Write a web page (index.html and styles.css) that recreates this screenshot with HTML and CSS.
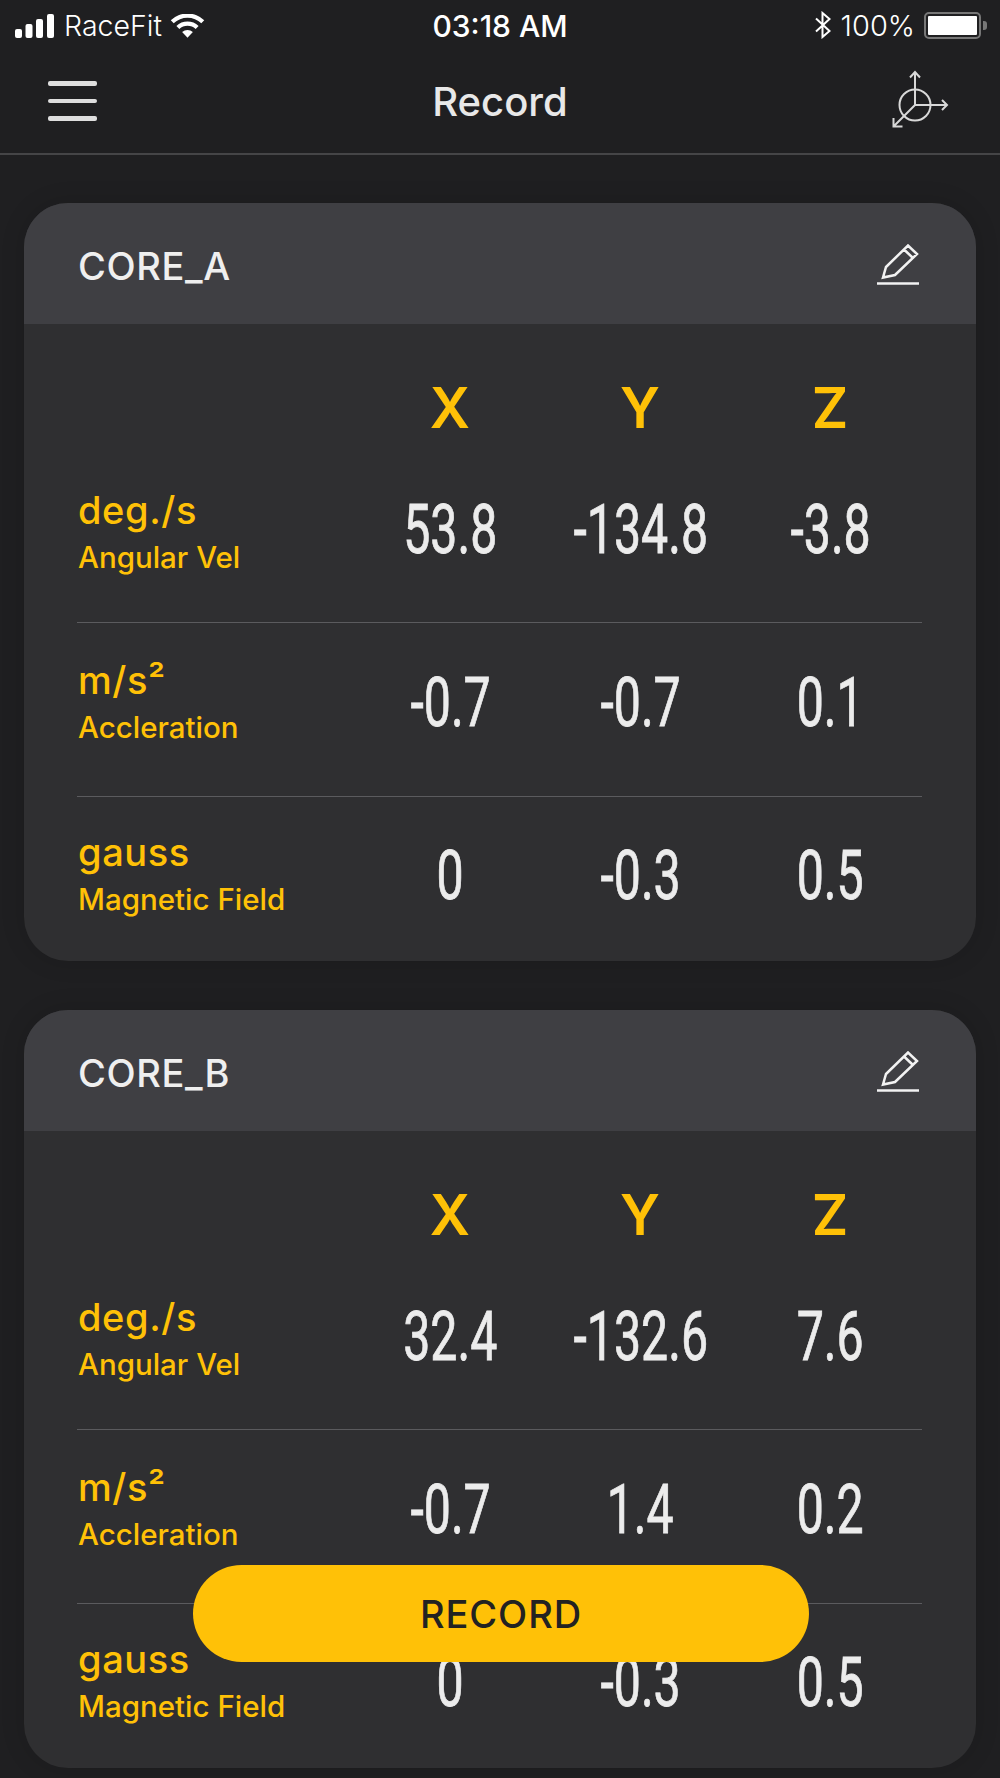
FILE: index.html
```html
<!DOCTYPE html>
<html lang="en">
<head>
<meta charset="utf-8">
<title>Record</title>
<link rel="stylesheet" href="styles.css">
</head>
<body>
<div class="phone">
  <div class="status">
    <div class="status-left">
      <svg class="signal" viewBox="0 0 40 24"><rect x="0" y="15" width="7" height="9" rx="2"/><rect x="10.5" y="10" width="7" height="14" rx="2"/><rect x="21" y="5" width="7" height="19" rx="2"/><rect x="32" y="0" width="7" height="24" rx="2"/></svg>
      <span class="carrier">RaceFit</span>
      <svg class="wifi" viewBox="0 0 36 24"><path d="M18 24 L12.5 18.2 A8 8 0 0 1 23.5 18.2 Z"/><path d="M9.6 15.2 L6.6 12 A16.5 16.5 0 0 1 29.4 12 L26.4 15.2 A12.2 12.2 0 0 0 9.6 15.2 Z"/><path d="M3.8 9.2 L0.8 6 A25 25 0 0 1 35.2 6 L32.2 9.2 A20.5 20.5 0 0 0 3.8 9.2 Z"/></svg>
    </div>
    <div class="clock">03:18 AM</div>
    <div class="status-right">
      <svg class="bt" viewBox="0 0 18 28"><path d="M2 7.5 L15.5 20 L8.5 26 L8.5 2 L15.5 8 L2 20.5"/></svg>
      <span class="pct">100%</span>
      <div class="battery"><div class="battery-fill"></div></div>
      <div class="battery-nub"></div>
    </div>
  </div>
  <header class="nav">
    <div class="burger"><span></span><span></span><span></span></div>
    <h1 class="title">Record</h1>
    <svg class="axes" viewBox="0 0 60 60"><circle cx="25" cy="36" r="15.5"/><path d="M25 36 V3 M20 8.5 L25 3 L30 8.5 M25 36 H57 M52 31 L57 36 L52 41 M25 36 L3.500 57.500 M3.500 49 V57.500 H12.500"/></svg>
  </header>

  <section class="card">
    <div class="card-head">
      <span class="card-name">CORE_A</span>
      <svg class="pencil" viewBox="0 0 42 42"><path d="M6 33.500 L9 23 L31 1.500 L40 10 L18 31 Z M27 5.500 L36 14"/><path d="M0 39.500 H42"/></svg>
    </div>
    <div class="axis-row"><span class="axis">X</span><span class="axis">Y</span><span class="axis">Z</span></div>
    <div class="row first">
      <div class="label"><div class="unit">deg./s</div><div class="quantity">Angular Vel</div></div>
      <div class="value"><span>53.8</span></div><div class="value"><span>-134.8</span></div><div class="value"><span>-3.8</span></div>
    </div>
    <div class="row ruled">
      <div class="label"><div class="unit">m/s²</div><div class="quantity">Accleration</div></div>
      <div class="value"><span>-0.7</span></div><div class="value"><span>-0.7</span></div><div class="value"><span>0.1</span></div>
    </div>
    <div class="row ruled last">
      <div class="label"><div class="unit">gauss</div><div class="quantity">Magnetic Field</div></div>
      <div class="value"><span>0</span></div><div class="value"><span>-0.3</span></div><div class="value"><span>0.5</span></div>
    </div>
  </section>

  <section class="card">
    <div class="card-head">
      <span class="card-name">CORE_B</span>
      <svg class="pencil" viewBox="0 0 42 42"><path d="M6 33.500 L9 23 L31 1.500 L40 10 L18 31 Z M27 5.500 L36 14"/><path d="M0 39.500 H42"/></svg>
    </div>
    <div class="axis-row"><span class="axis">X</span><span class="axis">Y</span><span class="axis">Z</span></div>
    <div class="row first">
      <div class="label"><div class="unit">deg./s</div><div class="quantity">Angular Vel</div></div>
      <div class="value"><span>32.4</span></div><div class="value"><span>-132.6</span></div><div class="value"><span>7.6</span></div>
    </div>
    <div class="row ruled">
      <div class="label"><div class="unit">m/s²</div><div class="quantity">Accleration</div></div>
      <div class="value"><span>-0.7</span></div><div class="value"><span>1.4</span></div><div class="value"><span>0.2</span></div>
    </div>
    <div class="row ruled last">
      <div class="label"><div class="unit">gauss</div><div class="quantity">Magnetic Field</div></div>
      <div class="value"><span>0</span></div><div class="value"><span>-0.3</span></div><div class="value"><span>0.5</span></div>
    </div>
  </section>

  <button class="record">RECORD</button>
</div>
</body>
</html>
```
FILE: styles.css
```css
* { box-sizing: border-box; }
html, body { margin: 0; padding: 0; background: #1f1f21; }
.phone {
  position: relative;
  width: 1000px;
  height: 1778px;
  overflow: hidden;
  background: #1f1f21;
  font-family: Inter, "Liberation Sans", sans-serif;
  color: #ececec;
}
.status {
  position: relative;
  height: 52px;
  display: flex;
  align-items: center;
  justify-content: space-between;
  padding: 0 13px 2px 15px;
  color: #fff;
}
.status-left, .status-right { display: flex; align-items: center; }
.signal { width: 40px; height: 24px; fill: #fff; margin-top: 1px; }
.carrier { font-size: 28.500px; font-weight: 300; margin-left: 9px; }
.wifi { width: 35px; height: 24px; fill: #fff; margin-left: 8px; margin-top: 1px; }
.clock {
  position: absolute;
  left: 0;
  right: 0;
  top: 11px;
  text-align: center;
  font-size: 30px;
  font-weight: 500;
  line-height: 30px;
}
.bt { width: 18px; height: 28px; fill: none; stroke: #fff; stroke-width: 2; }
.pct { font-size: 29px; font-weight: 300; margin-left: 9px; }
.battery {
  width: 57px;
  height: 27px;
  margin-left: 9px;
  border: 2px solid #777;
  border-radius: 5px;
  padding: 2px;
}
.battery-fill { width: 100%; height: 100%; background: #fff; border-radius: 1px; }
.battery-nub { width: 4px; height: 9px; margin-left: 2px; background: #777; border-radius: 0 3px 3px 0; }

.nav {
  height: 103px;
  border-bottom: 2px solid #454547;
  display: flex;
  align-items: center;
  justify-content: space-between;
  padding: 0 50px 0 48px;
  position: relative;
}
.burger { width: 49px; display: flex; flex-direction: column; gap: 13px; margin-top: -3px; }
.burger span { display: block; height: 4.500px; background: #dedede; border-radius: 2px; }
.title {
  position: absolute;
  left: 0;
  right: 0;
  top: 29px;
  margin: 0;
  text-align: center;
  font-size: 40px;
  line-height: 42px;
  font-weight: 500;
  color: #e8e8e8;
}
.axes { width: 60px; height: 60px; fill: none; stroke: #d8d8d8; stroke-width: 2; position: relative; top: -4px; }

.card {
  width: 952px;
  height: 758px;
  margin: 48px 0 0 24px;
  background: #2f2f31;
  border-radius: 44px;
  overflow: hidden;
  box-shadow: 0 0 24px rgba(0, 0, 0, 0.14);
}
.card + .card { margin-top: 49px; }
.card-head {
  height: 121px;
  background: #3f3f43;
  display: flex;
  align-items: center;
  justify-content: space-between;
  padding: 0 57px 0 54px;
}
.card-name { font-size: 38px; font-weight: 500; letter-spacing: 0.6px; color: #efefef; position: relative; top: 2px; }
.pencil { width: 42px; height: 42px; fill: none; stroke: #f2f2f2; stroke-width: 2.500; margin-top: 3px; }
.axis-row {
  height: 124px;
  display: grid;
  grid-template-columns: 278px repeat(3, 190px);
  padding: 59px 0 0 53px;
}
.axis {
  text-align: center;
  font-size: 56px;
  line-height: 50px;
  font-weight: 600;
  color: #ffc107;
}
.axis:first-child { grid-column: 2; }
.row {
  height: 174px;
  margin: 0 54px 0 53px;
  padding-bottom: 14px;
  display: grid;
  grid-template-columns: 278px repeat(3, 190px);
  align-items: center;
}
.first { padding-bottom: 10px; }
.first .label { margin-top: 5px; }
.ruled { border-top: 1.500px solid #5b5b5e; }
.last { height: 165px; padding-bottom: 7px; }
.last .label { margin-bottom: 2px; }
.label { padding-left: 1px; }
.unit { font-size: 38px; line-height: 50px; font-weight: 500; letter-spacing: 0.6px; color: #ffc107; }
.quantity { font-size: 29.500px; line-height: 45px; font-weight: 500; color: #ffc107; }
.value { text-align: center; padding-left: 1px; }
.value span {
  display: inline-block;
  font-family: Roboto, "Liberation Sans", sans-serif;
  font-size: 68px;
  line-height: 70px;
  font-weight: 400;
  -webkit-text-stroke: 0.8px #ececec;
  color: #ececec;
  transform: scaleX(0.71);
}
.record {
  position: absolute;
  left: 193px;
  top: 1565px;
  width: 616px;
  height: 97px;
  border: 0;
  border-radius: 48.500px;
  background: #ffc107;
  color: #222;
  font-family: Inter, "Liberation Sans", sans-serif;
  font-size: 38px;
  font-weight: 500;
  letter-spacing: 0.9px;
}
```
